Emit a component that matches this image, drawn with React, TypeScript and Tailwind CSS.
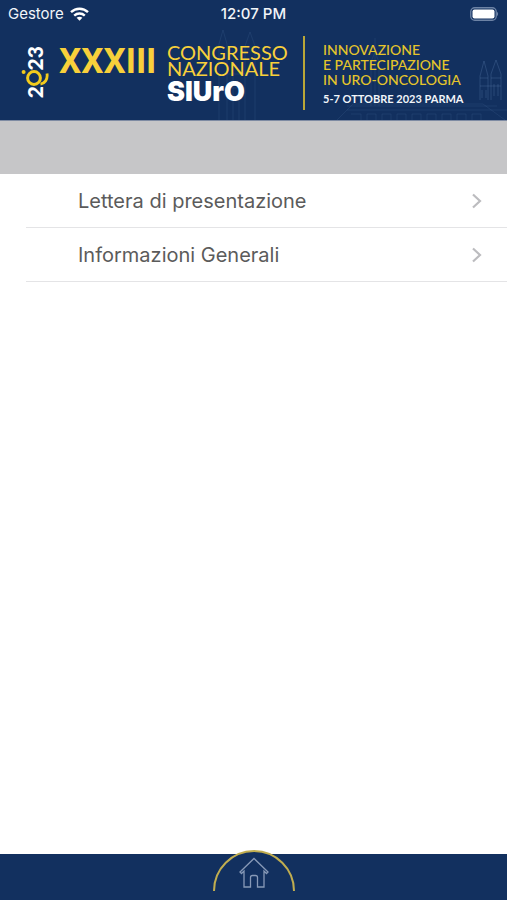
const menuItems = [
  { label: 'Lettera di presentazione', href: '#lettera' },
  { label: 'Informazioni Generali', href: '#informazioni' },
];

function StatusBar() {
  return (
    <div className="relative grid h-7 grid-cols-3 items-center px-2 font-['Inter',sans-serif] text-[15px] text-slate-100">
      <div className="flex items-center gap-1.5">
        <span>Gestore</span>
        <svg width="19" height="14" viewBox="0 0 19 14" fill="none" stroke="white" strokeWidth="2.4">
          <path d="M1 5.2C5.8 .6 13.2 .6 18 5.2" />
          <path d="M4.2 8.6C7.2 5.8 11.8 5.8 14.8 8.6" />
          <path d="M6.6 10.8C8.3 9.4 10.7 9.4 12.4 10.8L9.5 13.8Z" fill="white" stroke="none" />
        </svg>
      </div>
      <span className="text-center font-medium">12:07 PM</span>
      <svg className="justify-self-end" width="30" height="14" viewBox="0 0 30 14">
        <rect x="1.75" y=".75" width="25.5" height="12.5" rx="4" fill="none" stroke="#6d83a5" strokeWidth="1.3" />
        <rect x="3.5" y="2.5" width="22" height="9" rx="2" fill="white" />
        <path d="M28 4.8Q30.3 7 28 9.2Z" fill="#6d83a5" />
      </svg>
    </div>
  );
}

function YearMark() {
  return (
    <div className="mt-2.5 flex w-7 flex-col items-center font-['Lato',sans-serif] text-[21px] leading-6 font-black text-white">
      <span className="rotate-180 [writing-mode:vertical-rl]">23</span>
      <svg className="-my-px" width="28" height="18" viewBox="0 0 28 18" fill="none" stroke="#f3cb1c">
        <circle cx="13" cy="9" r="6.4" strokeWidth="3" />
        <circle cx="2.6" cy="3" r="2" fill="#f3cb1c" stroke="none" />
        <path d="M26 4.500C27 10.500 23.500 14.600 19.500 15.200" strokeWidth="2.8" />
      </svg>
      <span className="rotate-180 [writing-mode:vertical-rl]">2</span>
    </div>
  );
}

// Faint outlines of the Parma monuments behind the banner text
function Skyline() {
  return (
    <svg
      className="absolute right-0 bottom-0"
      width="350"
      height="96"
      viewBox="0 0 350 96"
      fill="none"
      stroke="#6f94c4"
      strokeOpacity=".13"
    >
      <path d="M62 96V20L66 6l4 14v76M76 96V48M82 96V64M88 96V22l5-14 5 14v74M70 50h18M70 64h18" />
      <path d="M218 82V14M214 82V38l4-10 4 10v44M190 82h150M190 86h160M180 96l16-16h130l22 16" />
      <path
        d="M323 76V52l4-15 4 15v24M334 76V50l5-14 5 14v26M323 54h8M334 54h10M323 62h21M325 66v8M329 66v8M337 60v12M341 60v12"
        strokeOpacity=".25"
      />
      <path d="M194 90h10v6M210 96v-6h9v6M225 96v-6h9v6M240 96v-6h9v6M255 96v-6h9v6M270 96v-6h9v6M285 96v-6h9v6M300 96v-6h9v6M315 96v-6h9v6" />
    </svg>
  );
}

function Banner() {
  return (
    <div className="relative flex h-[86px] items-start gap-2.5 pt-2 pl-[21px] font-['Lato',sans-serif]">
      <YearMark />
      <h1 className="flex gap-2.5 text-[#f8d03b]">
        <span className="mt-2 w-[98px] font-['Roboto',sans-serif] text-[35px] leading-9 font-bold">XXXIII</span>
        <span className="mt-2 block w-[122px] text-xl leading-4">
          CONGRESSO
          <br />
          NAZIONALE
          <span className="block font-['Inter',sans-serif] text-[27px] leading-8 font-black text-white">SIUrO</span>
        </span>
      </h1>
      <div className="ml-1 h-[74px] border-l-2 border-[#b9a638]" />
      <div className="ml-2 pt-1.5 text-sm leading-[15px] font-medium whitespace-nowrap text-[#e5c52b]">
        <p>
          INNOVAZIONE
          <br />
          E PARTECIPAZIONE
          <br />
          IN URO-ONCOLOGIA
        </p>
        <p className="mt-1 text-[11px] font-bold text-slate-100">5-7 OTTOBRE 2023 PARMA</p>
      </div>
    </div>
  );
}

function MenuList() {
  return (
    <nav>
      <ul className="pl-[26px]">
        {menuItems.map((item) => (
          <li key={item.label} className="border-b border-[#e4e4e6]">
            <a
              href={item.href}
              className="flex h-[53px] items-center justify-between pr-6 pl-[52px] font-['Inter',sans-serif] text-xl text-[#5b5b5b]"
            >
              {item.label}
              <svg width="12" height="16" viewBox="0 0 12 16" fill="none" stroke="#bcbcbf" strokeWidth="2.2">
                <path d="M2 1.5L9 8l-7 6.5" />
              </svg>
            </a>
          </li>
        ))}
      </ul>
    </nav>
  );
}

function Footer() {
  return (
    <footer className="relative flex h-[46px] justify-center bg-[#12305f]">
      <button type="button" aria-label="Home" className="absolute -top-1">
        <svg width="82" height="42" viewBox="0 0 82 42" fill="none">
          <path d="M1 41a40 40 0 0 1 80 0" fill="#12305f" stroke="#c0ad50" strokeWidth="2" />
          <path
            d="M27 22L41 8.5l14 13.5-1.5 1.5-2.5-2.4V37h-6.5V27.5a2 2 0 0 0-2-2h-3a2 2 0 0 0-2 2V37H31V21.1L28.5 23.5Z"
            stroke="#8799b7"
            strokeWidth="1.3"
          />
        </svg>
      </button>
    </footer>
  );
}

export default function App() {
  return (
    <div className="flex min-h-screen flex-col bg-white">
      <header className="relative overflow-hidden border-b border-[#7e8ba3] bg-[#12305f] pb-1.5">
        <Skyline />
        <StatusBar />
        <Banner />
      </header>
      <div className="h-[53px] bg-[#c6c6c8]" />
      <main className="flex-1">
        <MenuList />
      </main>
      <Footer />
    </div>
  );
}
